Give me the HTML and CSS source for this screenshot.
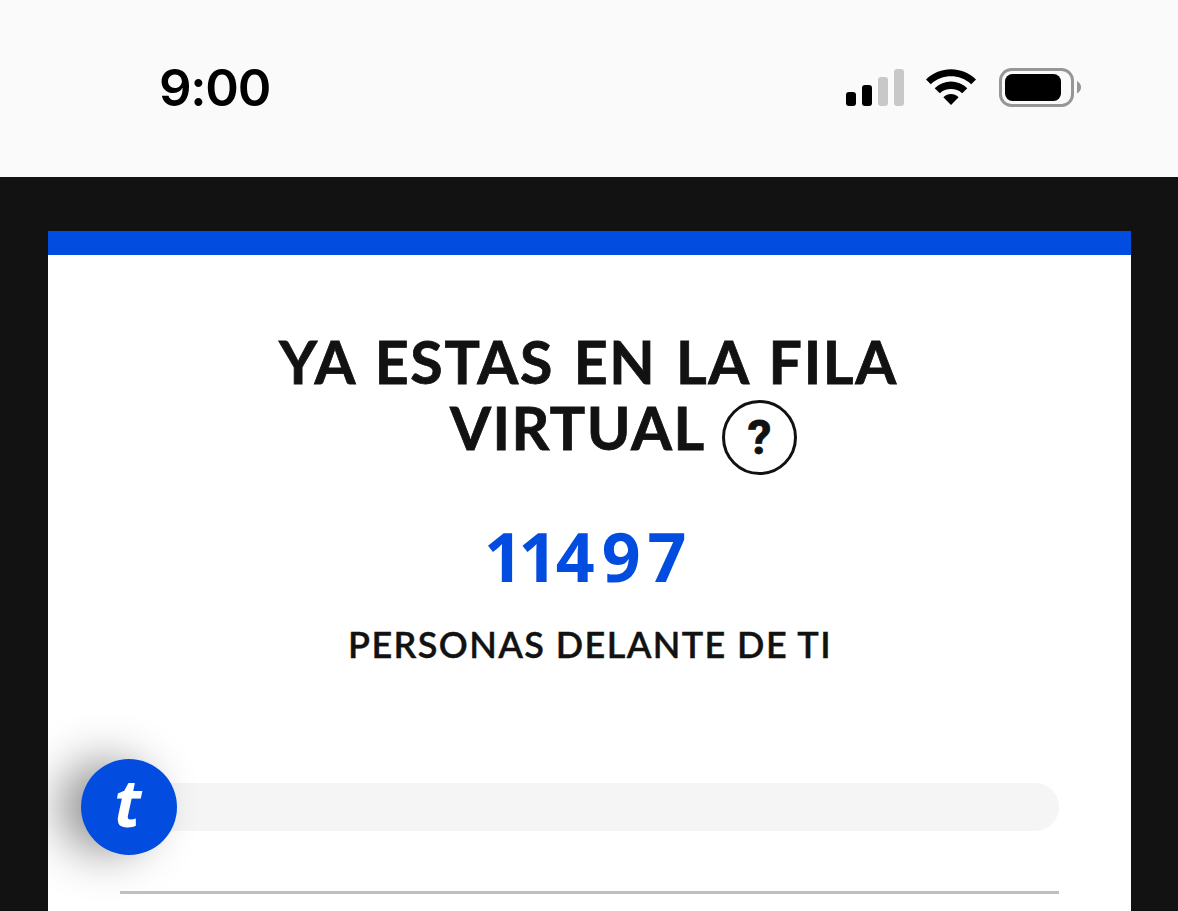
FILE: index.html
```html
<!DOCTYPE html>
<html lang="es">
<head>
<meta charset="utf-8">
<title>Fila virtual</title>
<link rel="stylesheet" href="styles.css">
</head>
<body>
<header class="status">
  <span class="time">9:00</span>
  <div class="indicators">
    <svg class="signal" width="58" height="38" viewBox="0 0 58 38">
      <rect x="0" y="24" width="10" height="14" rx="3"/>
      <rect x="16" y="17" width="10" height="21" rx="3"/>
      <rect class="off" x="32" y="9" width="10" height="29" rx="3"/>
      <rect class="off" x="48" y="1" width="10" height="37" rx="3"/>
    </svg>
    <svg class="wifi" width="52" height="38" viewBox="0 0 52 38">
      <path d="M1 11.4 C15 -2.3 37 -2.3 51 11.4 L46.2 16.2 C34.500 5.600 17.500 5.600 5.800 16.200Z"/>
      <path d="M9.700 20.200 C19 11.300 33 11.300 42.300 20.200 L37.200 25.300 C31 19.700 21 19.700 14.800 25.300Z"/>
      <path d="M18.400 29.200 C23 25 29 25 33.600 29.200 L26 37Z"/>
    </svg>
    <svg class="battery" width="84" height="39" viewBox="0 0 84 39">
      <rect class="shell" x="1.5" y="1.5" width="72" height="36" rx="11"/>
      <rect x="6" y="6" width="56" height="27" rx="7.5"/>
      <path class="tip" d="M78 13 C83.4 15.5 83.4 23 78 25.5Z"/>
    </svg>
  </div>
</header>
<main class="card">
  <h1 class="title">
    <span class="line line-first">YA ESTAS EN LA FILA</span>
    <span class="line line-second"><span class="word">VIRTUAL</span><span class="help">?</span></span>
  </h1>
  <p class="count"><span class="tight">1</span><span class="snug">1</span><span class="wide">49</span>7</p>
  <p class="caption">PERSONAS DELANTE DE TI</p>
  <div class="progress"><span class="marker"><span class="letter">t</span></span></div>
  <hr class="divider">
</main>
</body>
</html>
```
FILE: styles.css
```css
* { box-sizing: border-box; }
body {
  margin: 0;
  height: 911px;
  overflow: hidden;
  display: flex;
  flex-direction: column;
  background: #121212;
  color: #121212;
  font-family: Lato, sans-serif;
}
.status {
  height: 177px;
  flex: none;
  display: flex;
  justify-content: space-between;
  align-items: flex-start;
  padding: 68px 95px 0 159px;
  background: #fafafa;
  color: #000;
}
.time {
  font: 600 51px/40px Inter, sans-serif;
  letter-spacing: -1.3px;
}
.indicators { display: flex; }
.signal { margin-right: 21px; }
.signal .off { fill: #c8c8c8; }
.wifi { margin-right: 22px; }
.shell { fill: none; stroke: #969696; stroke-width: 3; }
.tip { fill: #969696; }
.card {
  flex: 1;
  margin: 54px 47px 0 48px;
  padding: 0 72px;
  border-top: 24px solid #024ddf;
  background: #fff;
  overflow: hidden;
  display: flex;
  flex-direction: column;
}
.title {
  margin: 74px 0 0;
  font-size: 59px;
  line-height: 66px;
  font-weight: 700;
  height: 145px;
  -webkit-text-stroke: 0.8px #121212;
}
.line { display: flex; height: 66px; white-space: nowrap; }
.line-first { padding-left: 159px; letter-spacing: 1.7px; word-spacing: 3.5px; }
.line-second { padding-left: 330px; }
.word { width: 272px; letter-spacing: 1.5px; }
.help {
  flex: none;
  width: 75px;
  height: 75px;
  margin-top: 5px;
  border: 3px solid #121212;
  border-radius: 50%;
  font: 700 48px/70px Roboto, sans-serif;
  text-align: center;
}
.count {
  margin: 44px 0 0;
  padding-left: 364px;
  height: 76px;
  color: #024ddf;
  font: 700 68px/75px "Open Sans", sans-serif;
  letter-spacing: 2px;
}
.tight { letter-spacing: -4.5px; }
.snug { letter-spacing: -1.5px; }
.wide { letter-spacing: 7px; }
.caption {
  margin: 28px 0 0;
  padding-left: 228px;
  height: 44px;
  font-size: 36px;
  line-height: 44px;
  font-weight: 600;
  letter-spacing: 1.4px;
  white-space: nowrap;
  -webkit-text-stroke: 0.4px #121212;
}
.progress {
  flex: none;
  display: flex;
  align-items: center;
  height: 48px;
  margin-top: 117px;
  border-radius: 24px;
  background: #f5f5f5;
}
.marker {
  flex: none;
  width: 96px;
  height: 96px;
  margin-left: -39px;
  border-radius: 50%;
  background: #024ddf;
  box-shadow: -24px 0 48px -3px rgba(0, 0, 0, .45);
  color: #fff;
  text-align: center;
}
.letter { margin-right: 3px; font: italic 700 66px/84px "Open Sans", sans-serif; }
.divider {
  width: 100%;
  height: 3px;
  margin: 60px 0 0;
  border: 0;
  flex: none;
  background: #bfbfbf;
}
```
